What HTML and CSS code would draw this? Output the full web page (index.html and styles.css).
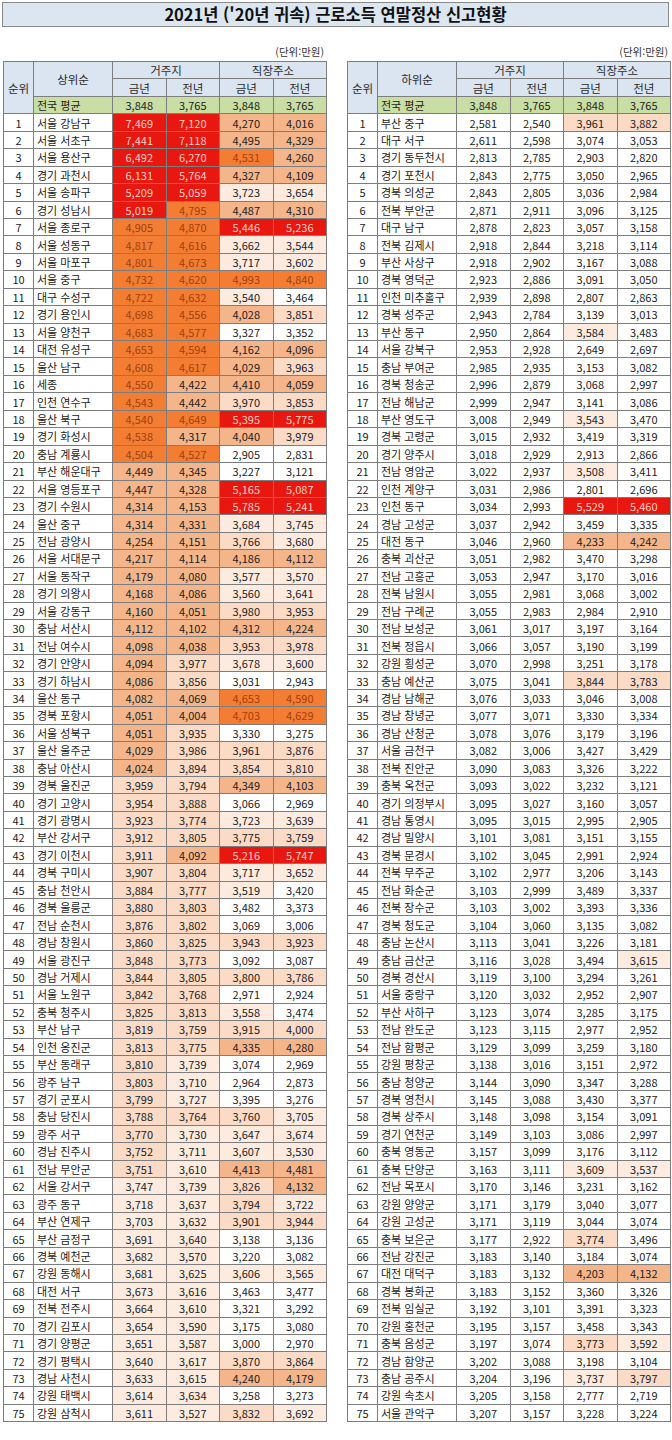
FILE: index.html
```
<!DOCTYPE html>
<html lang="ko">
<head>
<meta charset="utf-8">
<title>2021년 ('20년 귀속) 근로소득 연말정산 신고현황</title>
<link rel="stylesheet" href="styles.css">
</head>
<body>
<div class="page">
  <div class="title">2021년 ('20년 귀속) 근로소득 연말정산 신고현황</div>
  <div class="tables">
    <div class="panel">
      <div class="unit">(단위:만원)</div>
      <table class="tb">
        <colgroup><col class="c1"><col class="c2"><col class="c3"><col class="c3"><col class="c3"><col class="c3"></colgroup>
        <thead>
          <tr><th rowspan="3">순위</th><th rowspan="2">상위순</th><th colspan="2">거주지</th><th colspan="2">직장주소</th></tr>
          <tr><th>금년</th><th>전년</th><th>금년</th><th>전년</th></tr>
          <tr class="avg"><td>전국 평균</td><td>3,848</td><td>3,765</td><td>3,848</td><td>3,765</td></tr>
        </thead>
        <tbody>
          <tr><td>1</td><td>서울 강남구</td><td class="f">7,469</td><td class="f">7,120</td><td class="d">4,270</td><td class="d">4,016</td></tr>
          <tr><td>2</td><td>서울 서초구</td><td class="f">7,441</td><td class="f">7,118</td><td class="d">4,495</td><td class="d">4,329</td></tr>
          <tr><td>3</td><td>서울 용산구</td><td class="f">6,492</td><td class="f">6,270</td><td class="e">4,531</td><td class="d">4,260</td></tr>
          <tr><td>4</td><td>경기 과천시</td><td class="f">6,131</td><td class="f">5,764</td><td class="d">4,327</td><td class="d">4,109</td></tr>
          <tr><td>5</td><td>서울 송파구</td><td class="f">5,209</td><td class="f">5,059</td><td class="b">3,723</td><td class="b">3,654</td></tr>
          <tr><td>6</td><td>경기 성남시</td><td class="f">5,019</td><td class="e">4,795</td><td class="d">4,487</td><td class="d">4,310</td></tr>
          <tr><td>7</td><td>서울 종로구</td><td class="e">4,905</td><td class="e">4,870</td><td class="f">5,446</td><td class="f">5,236</td></tr>
          <tr><td>8</td><td>서울 성동구</td><td class="e">4,817</td><td class="e">4,616</td><td class="b">3,662</td><td class="b">3,544</td></tr>
          <tr><td>9</td><td>서울 마포구</td><td class="e">4,801</td><td class="e">4,673</td><td class="b">3,717</td><td class="b">3,602</td></tr>
          <tr><td>10</td><td>서울 중구</td><td class="e">4,732</td><td class="e">4,620</td><td class="e">4,993</td><td class="e">4,840</td></tr>
          <tr><td>11</td><td>대구 수성구</td><td class="e">4,722</td><td class="e">4,632</td><td class="b">3,540</td><td>3,464</td></tr>
          <tr><td>12</td><td>경기 용인시</td><td class="e">4,698</td><td class="e">4,556</td><td class="d">4,028</td><td class="c">3,851</td></tr>
          <tr><td>13</td><td>서울 양천구</td><td class="e">4,683</td><td class="e">4,577</td><td>3,327</td><td>3,352</td></tr>
          <tr><td>14</td><td>대전 유성구</td><td class="e">4,653</td><td class="e">4,594</td><td class="d">4,162</td><td class="d">4,096</td></tr>
          <tr><td>15</td><td>울산 남구</td><td class="e">4,608</td><td class="e">4,617</td><td class="d">4,029</td><td class="c">3,963</td></tr>
          <tr><td>16</td><td>세종</td><td class="e">4,550</td><td class="d">4,422</td><td class="d">4,410</td><td class="d">4,059</td></tr>
          <tr><td>17</td><td>인천 연수구</td><td class="e">4,543</td><td class="d">4,442</td><td class="c">3,970</td><td class="c">3,853</td></tr>
          <tr><td>18</td><td>울산 북구</td><td class="e">4,540</td><td class="e">4,649</td><td class="f">5,395</td><td class="f">5,775</td></tr>
          <tr><td>19</td><td>경기 화성시</td><td class="e">4,538</td><td class="d">4,317</td><td class="d">4,040</td><td class="c">3,979</td></tr>
          <tr><td>20</td><td>충남 계룡시</td><td class="e">4,504</td><td class="e">4,527</td><td>2,905</td><td>2,831</td></tr>
          <tr><td>21</td><td>부산 해운대구</td><td class="d">4,449</td><td class="d">4,345</td><td>3,227</td><td>3,121</td></tr>
          <tr><td>22</td><td>서울 영등포구</td><td class="d">4,447</td><td class="d">4,328</td><td class="f">5,165</td><td class="f">5,087</td></tr>
          <tr><td>23</td><td>경기 수원시</td><td class="d">4,314</td><td class="d">4,153</td><td class="f">5,785</td><td class="f">5,241</td></tr>
          <tr><td>24</td><td>울산 중구</td><td class="d">4,314</td><td class="d">4,331</td><td class="b">3,684</td><td class="b">3,745</td></tr>
          <tr><td>25</td><td>전남 광양시</td><td class="d">4,254</td><td class="d">4,151</td><td class="c">3,766</td><td class="b">3,680</td></tr>
          <tr><td>26</td><td>서울 서대문구</td><td class="d">4,217</td><td class="d">4,114</td><td class="d">4,186</td><td class="d">4,112</td></tr>
          <tr><td>27</td><td>서울 동작구</td><td class="d">4,179</td><td class="d">4,080</td><td class="b">3,577</td><td class="b">3,570</td></tr>
          <tr><td>28</td><td>경기 의왕시</td><td class="d">4,168</td><td class="d">4,086</td><td class="b">3,560</td><td class="b">3,641</td></tr>
          <tr><td>29</td><td>서울 강동구</td><td class="d">4,160</td><td class="d">4,051</td><td class="c">3,980</td><td class="c">3,953</td></tr>
          <tr><td>30</td><td>충남 서산시</td><td class="d">4,112</td><td class="d">4,102</td><td class="d">4,312</td><td class="d">4,224</td></tr>
          <tr><td>31</td><td>전남 여수시</td><td class="d">4,098</td><td class="d">4,038</td><td class="c">3,953</td><td class="c">3,978</td></tr>
          <tr><td>32</td><td>경기 안양시</td><td class="d">4,094</td><td class="c">3,977</td><td class="b">3,678</td><td class="b">3,600</td></tr>
          <tr><td>33</td><td>경기 하남시</td><td class="d">4,086</td><td class="c">3,856</td><td>3,031</td><td>2,943</td></tr>
          <tr><td>34</td><td>울산 동구</td><td class="d">4,082</td><td class="d">4,069</td><td class="e">4,653</td><td class="e">4,590</td></tr>
          <tr><td>35</td><td>경북 포항시</td><td class="d">4,051</td><td class="d">4,004</td><td class="e">4,703</td><td class="e">4,629</td></tr>
          <tr><td>36</td><td>서울 성북구</td><td class="d">4,051</td><td class="c">3,935</td><td>3,330</td><td>3,275</td></tr>
          <tr><td>37</td><td>울산 울주군</td><td class="d">4,029</td><td class="c">3,986</td><td class="c">3,961</td><td class="c">3,876</td></tr>
          <tr><td>38</td><td>충남 아산시</td><td class="d">4,024</td><td class="c">3,894</td><td class="c">3,854</td><td class="c">3,810</td></tr>
          <tr><td>39</td><td>경북 울진군</td><td class="c">3,959</td><td class="c">3,794</td><td class="d">4,349</td><td class="d">4,103</td></tr>
          <tr><td>40</td><td>경기 고양시</td><td class="c">3,954</td><td class="c">3,888</td><td>3,066</td><td>2,969</td></tr>
          <tr><td>41</td><td>경기 광명시</td><td class="c">3,923</td><td class="c">3,774</td><td class="b">3,723</td><td class="b">3,639</td></tr>
          <tr><td>42</td><td>부산 강서구</td><td class="c">3,912</td><td class="c">3,805</td><td class="c">3,775</td><td class="c">3,759</td></tr>
          <tr><td>43</td><td>경기 이천시</td><td class="c">3,911</td><td class="d">4,092</td><td class="f">5,216</td><td class="f">5,747</td></tr>
          <tr><td>44</td><td>경북 구미시</td><td class="c">3,907</td><td class="c">3,804</td><td class="b">3,717</td><td class="b">3,652</td></tr>
          <tr class="brk"><td>45</td><td>충남 천안시</td><td class="c">3,884</td><td class="c">3,777</td><td class="b">3,519</td><td>3,420</td></tr>
          <tr><td>46</td><td>경북 울릉군</td><td class="c">3,880</td><td class="c">3,803</td><td>3,482</td><td>3,373</td></tr>
          <tr><td>47</td><td>전남 순천시</td><td class="c">3,876</td><td class="c">3,802</td><td>3,069</td><td>3,006</td></tr>
          <tr><td>48</td><td>경남 창원시</td><td class="c">3,860</td><td class="c">3,825</td><td class="c">3,943</td><td class="c">3,923</td></tr>
          <tr><td>49</td><td>서울 광진구</td><td class="c">3,848</td><td class="c">3,773</td><td>3,092</td><td>3,087</td></tr>
          <tr><td>50</td><td>경남 거제시</td><td class="c">3,844</td><td class="c">3,805</td><td class="c">3,800</td><td class="c">3,786</td></tr>
          <tr><td>51</td><td>서울 노원구</td><td class="c">3,842</td><td class="c">3,768</td><td>2,971</td><td>2,924</td></tr>
          <tr><td>52</td><td>충북 청주시</td><td class="c">3,825</td><td class="c">3,813</td><td class="b">3,558</td><td>3,474</td></tr>
          <tr><td>53</td><td>부산 남구</td><td class="c">3,819</td><td class="c">3,759</td><td class="c">3,915</td><td class="c">4,000</td></tr>
          <tr><td>54</td><td>인천 옹진군</td><td class="c">3,813</td><td class="c">3,775</td><td class="d">4,335</td><td class="d">4,280</td></tr>
          <tr><td>55</td><td>부산 동래구</td><td class="c">3,810</td><td class="b">3,739</td><td>3,074</td><td>2,969</td></tr>
          <tr><td>56</td><td>광주 남구</td><td class="c">3,803</td><td class="b">3,710</td><td>2,964</td><td>2,873</td></tr>
          <tr><td>57</td><td>경기 군포시</td><td class="c">3,799</td><td class="b">3,727</td><td>3,395</td><td>3,276</td></tr>
          <tr><td>58</td><td>충남 당진시</td><td class="c">3,788</td><td class="c">3,764</td><td class="c">3,760</td><td class="b">3,705</td></tr>
          <tr><td>59</td><td>광주 서구</td><td class="c">3,770</td><td class="b">3,730</td><td class="b">3,647</td><td class="b">3,674</td></tr>
          <tr><td>60</td><td>경남 진주시</td><td class="c">3,752</td><td class="b">3,711</td><td class="b">3,607</td><td class="b">3,530</td></tr>
          <tr><td>61</td><td>전남 무안군</td><td class="c">3,751</td><td class="b">3,610</td><td class="d">4,413</td><td class="d">4,481</td></tr>
          <tr><td>62</td><td>서울 강서구</td><td class="b">3,747</td><td class="b">3,739</td><td class="c">3,826</td><td class="d">4,132</td></tr>
          <tr><td>63</td><td>광주 동구</td><td class="b">3,718</td><td class="b">3,637</td><td class="c">3,794</td><td class="b">3,722</td></tr>
          <tr><td>64</td><td>부산 연제구</td><td class="b">3,703</td><td class="b">3,632</td><td class="c">3,901</td><td class="c">3,944</td></tr>
          <tr><td>65</td><td>부산 금정구</td><td class="b">3,691</td><td class="b">3,640</td><td>3,138</td><td>3,136</td></tr>
          <tr><td>66</td><td>경북 예천군</td><td class="b">3,682</td><td class="b">3,570</td><td>3,220</td><td>3,082</td></tr>
          <tr class="brk"><td>67</td><td>강원 동해시</td><td class="b">3,681</td><td class="b">3,625</td><td class="b">3,606</td><td class="b">3,565</td></tr>
          <tr><td>68</td><td>대전 서구</td><td class="b">3,673</td><td class="b">3,616</td><td>3,463</td><td>3,477</td></tr>
          <tr><td>69</td><td>전북 전주시</td><td class="b">3,664</td><td class="b">3,610</td><td>3,321</td><td>3,292</td></tr>
          <tr><td>70</td><td>경기 김포시</td><td class="b">3,654</td><td class="b">3,590</td><td>3,175</td><td>3,080</td></tr>
          <tr><td>71</td><td>경기 양평군</td><td class="b">3,651</td><td class="b">3,587</td><td>3,000</td><td>2,970</td></tr>
          <tr><td>72</td><td>경기 평택시</td><td class="b">3,640</td><td class="b">3,617</td><td class="c">3,870</td><td class="c">3,864</td></tr>
          <tr><td>73</td><td>경남 사천시</td><td class="b">3,633</td><td class="b">3,615</td><td class="d">4,240</td><td class="d">4,179</td></tr>
          <tr><td>74</td><td>강원 태백시</td><td class="b">3,614</td><td class="b">3,634</td><td>3,258</td><td>3,273</td></tr>
          <tr><td>75</td><td>강원 삼척시</td><td class="b">3,611</td><td class="b">3,527</td><td class="c">3,832</td><td class="b">3,692</td></tr>
        </tbody>
      </table>
    </div>
    <div class="panel">
      <div class="unit">(단위:만원)</div>
      <table class="tb">
        <colgroup><col class="c1"><col class="c2"><col class="c3"><col class="c3"><col class="c3"><col class="c3"></colgroup>
        <thead>
          <tr><th rowspan="3">순위</th><th rowspan="2">하위순</th><th colspan="2">거주지</th><th colspan="2">직장주소</th></tr>
          <tr><th>금년</th><th>전년</th><th>금년</th><th>전년</th></tr>
          <tr class="avg"><td>전국 평균</td><td>3,848</td><td>3,765</td><td>3,848</td><td>3,765</td></tr>
        </thead>
        <tbody>
          <tr><td>1</td><td>부산 중구</td><td>2,581</td><td>2,540</td><td class="c">3,961</td><td class="c">3,882</td></tr>
          <tr><td>2</td><td>대구 서구</td><td>2,611</td><td>2,598</td><td>3,074</td><td>3,053</td></tr>
          <tr><td>3</td><td>경기 동두천시</td><td>2,813</td><td>2,785</td><td>2,903</td><td>2,820</td></tr>
          <tr><td>4</td><td>경기 포천시</td><td>2,843</td><td>2,775</td><td>3,050</td><td>2,965</td></tr>
          <tr><td>5</td><td>경북 의성군</td><td>2,843</td><td>2,805</td><td>3,036</td><td>2,984</td></tr>
          <tr><td>6</td><td>전북 부안군</td><td>2,871</td><td>2,911</td><td>3,096</td><td>3,125</td></tr>
          <tr><td>7</td><td>대구 남구</td><td>2,878</td><td>2,823</td><td>3,057</td><td>3,158</td></tr>
          <tr><td>8</td><td>전북 김제시</td><td>2,918</td><td>2,844</td><td>3,218</td><td>3,114</td></tr>
          <tr><td>9</td><td>부산 사상구</td><td>2,918</td><td>2,902</td><td>3,167</td><td>3,088</td></tr>
          <tr><td>10</td><td>경북 영덕군</td><td>2,923</td><td>2,886</td><td>3,091</td><td>3,050</td></tr>
          <tr><td>11</td><td>인천 미추홀구</td><td>2,939</td><td>2,898</td><td>2,807</td><td>2,863</td></tr>
          <tr><td>12</td><td>경북 성주군</td><td>2,943</td><td>2,784</td><td>3,139</td><td>3,013</td></tr>
          <tr><td>13</td><td>부산 동구</td><td>2,950</td><td>2,864</td><td class="b">3,584</td><td>3,483</td></tr>
          <tr><td>14</td><td>서울 강북구</td><td>2,953</td><td>2,928</td><td>2,649</td><td>2,697</td></tr>
          <tr><td>15</td><td>충남 부여군</td><td>2,985</td><td>2,935</td><td>3,153</td><td>3,082</td></tr>
          <tr><td>16</td><td>경북 청송군</td><td>2,996</td><td>2,879</td><td>3,068</td><td>2,997</td></tr>
          <tr><td>17</td><td>전남 해남군</td><td>2,999</td><td>2,947</td><td>3,141</td><td>3,086</td></tr>
          <tr><td>18</td><td>부산 영도구</td><td>3,008</td><td>2,949</td><td class="b">3,543</td><td>3,470</td></tr>
          <tr><td>19</td><td>경북 고령군</td><td>3,015</td><td>2,932</td><td>3,419</td><td>3,319</td></tr>
          <tr><td>20</td><td>경기 양주시</td><td>3,018</td><td>2,929</td><td>2,913</td><td>2,866</td></tr>
          <tr><td>21</td><td>전남 영암군</td><td>3,022</td><td>2,937</td><td class="b">3,508</td><td>3,411</td></tr>
          <tr><td>22</td><td>인천 계양구</td><td>3,031</td><td>2,986</td><td>2,801</td><td>2,696</td></tr>
          <tr><td>23</td><td>인천 동구</td><td>3,034</td><td>2,993</td><td class="f">5,529</td><td class="f">5,460</td></tr>
          <tr><td>24</td><td>경남 고성군</td><td>3,037</td><td>2,942</td><td>3,459</td><td>3,335</td></tr>
          <tr><td>25</td><td>대전 동구</td><td>3,046</td><td>2,960</td><td class="d">4,233</td><td class="d">4,242</td></tr>
          <tr><td>26</td><td>충북 괴산군</td><td>3,051</td><td>2,982</td><td>3,470</td><td>3,298</td></tr>
          <tr><td>27</td><td>전남 고흥군</td><td>3,053</td><td>2,947</td><td>3,170</td><td>3,016</td></tr>
          <tr><td>28</td><td>전북 남원시</td><td>3,055</td><td>2,981</td><td>3,068</td><td>3,002</td></tr>
          <tr><td>29</td><td>전남 구례군</td><td>3,055</td><td>2,983</td><td>2,984</td><td>2,910</td></tr>
          <tr><td>30</td><td>전남 보성군</td><td>3,061</td><td>3,017</td><td>3,197</td><td>3,164</td></tr>
          <tr><td>31</td><td>전북 정읍시</td><td>3,066</td><td>3,057</td><td>3,190</td><td>3,199</td></tr>
          <tr><td>32</td><td>강원 횡성군</td><td>3,070</td><td>2,998</td><td>3,251</td><td>3,178</td></tr>
          <tr><td>33</td><td>충남 예산군</td><td>3,075</td><td>3,041</td><td class="c">3,844</td><td class="c">3,783</td></tr>
          <tr><td>34</td><td>경남 남해군</td><td>3,076</td><td>3,033</td><td>3,046</td><td>3,008</td></tr>
          <tr><td>35</td><td>경남 창녕군</td><td>3,077</td><td>3,071</td><td>3,330</td><td>3,334</td></tr>
          <tr><td>36</td><td>경남 산청군</td><td>3,078</td><td>3,076</td><td>3,179</td><td>3,196</td></tr>
          <tr><td>37</td><td>서울 금천구</td><td>3,082</td><td>3,006</td><td>3,427</td><td>3,429</td></tr>
          <tr><td>38</td><td>전북 진안군</td><td>3,090</td><td>3,083</td><td>3,326</td><td>3,222</td></tr>
          <tr><td>39</td><td>충북 옥천군</td><td>3,093</td><td>3,022</td><td>3,232</td><td>3,121</td></tr>
          <tr><td>40</td><td>경기 의정부시</td><td>3,095</td><td>3,027</td><td>3,160</td><td>3,057</td></tr>
          <tr><td>41</td><td>경남 통영시</td><td>3,095</td><td>3,015</td><td>2,995</td><td>2,905</td></tr>
          <tr><td>42</td><td>경남 밀양시</td><td>3,101</td><td>3,081</td><td>3,151</td><td>3,155</td></tr>
          <tr><td>43</td><td>경북 문경시</td><td>3,102</td><td>3,045</td><td>2,991</td><td>2,924</td></tr>
          <tr><td>44</td><td>전북 무주군</td><td>3,102</td><td>2,977</td><td>3,206</td><td>3,143</td></tr>
          <tr class="brk"><td>45</td><td>전남 화순군</td><td>3,103</td><td>2,999</td><td>3,489</td><td>3,337</td></tr>
          <tr><td>46</td><td>전북 장수군</td><td>3,103</td><td>3,002</td><td>3,393</td><td>3,336</td></tr>
          <tr><td>47</td><td>경북 청도군</td><td>3,104</td><td>3,060</td><td>3,135</td><td>3,082</td></tr>
          <tr><td>48</td><td>충남 논산시</td><td>3,113</td><td>3,041</td><td>3,226</td><td>3,181</td></tr>
          <tr><td>49</td><td>충남 금산군</td><td>3,116</td><td>3,028</td><td>3,494</td><td class="b">3,615</td></tr>
          <tr><td>50</td><td>경북 경산시</td><td>3,119</td><td>3,100</td><td>3,294</td><td>3,261</td></tr>
          <tr><td>51</td><td>서울 중랑구</td><td>3,120</td><td>3,032</td><td>2,952</td><td>2,907</td></tr>
          <tr><td>52</td><td>부산 사하구</td><td>3,123</td><td>3,074</td><td>3,285</td><td>3,175</td></tr>
          <tr><td>53</td><td>전남 완도군</td><td>3,123</td><td>3,115</td><td>2,977</td><td>2,952</td></tr>
          <tr><td>54</td><td>전남 함평군</td><td>3,129</td><td>3,099</td><td>3,259</td><td>3,180</td></tr>
          <tr><td>55</td><td>강원 평창군</td><td>3,138</td><td>3,016</td><td>3,151</td><td>2,972</td></tr>
          <tr><td>56</td><td>충남 청양군</td><td>3,144</td><td>3,090</td><td>3,347</td><td>3,288</td></tr>
          <tr><td>57</td><td>경북 영천시</td><td>3,145</td><td>3,088</td><td>3,430</td><td>3,377</td></tr>
          <tr><td>58</td><td>경북 상주시</td><td>3,148</td><td>3,098</td><td>3,154</td><td>3,091</td></tr>
          <tr><td>59</td><td>경기 연천군</td><td>3,149</td><td>3,103</td><td>3,086</td><td>2,997</td></tr>
          <tr><td>60</td><td>충북 영동군</td><td>3,157</td><td>3,099</td><td>3,176</td><td>3,112</td></tr>
          <tr><td>61</td><td>충북 단양군</td><td>3,163</td><td>3,111</td><td class="b">3,609</td><td class="b">3,537</td></tr>
          <tr><td>62</td><td>전남 목포시</td><td>3,170</td><td>3,146</td><td>3,231</td><td>3,162</td></tr>
          <tr><td>63</td><td>강원 양양군</td><td>3,171</td><td>3,179</td><td>3,040</td><td>3,077</td></tr>
          <tr><td>64</td><td>강원 고성군</td><td>3,171</td><td>3,119</td><td>3,044</td><td>3,074</td></tr>
          <tr><td>65</td><td>충북 보은군</td><td>3,177</td><td>2,922</td><td class="c">3,774</td><td>3,496</td></tr>
          <tr><td>66</td><td>전남 강진군</td><td>3,183</td><td>3,140</td><td>3,184</td><td>3,074</td></tr>
          <tr class="brk"><td>67</td><td>대전 대덕구</td><td>3,183</td><td>3,132</td><td class="d">4,203</td><td class="d">4,132</td></tr>
          <tr><td>68</td><td>경북 봉화군</td><td>3,183</td><td>3,152</td><td>3,360</td><td>3,326</td></tr>
          <tr><td>69</td><td>전북 임실군</td><td>3,192</td><td>3,101</td><td>3,391</td><td>3,323</td></tr>
          <tr><td>70</td><td>강원 홍천군</td><td>3,195</td><td>3,157</td><td>3,458</td><td>3,343</td></tr>
          <tr><td>71</td><td>충북 음성군</td><td>3,197</td><td>3,074</td><td class="c">3,773</td><td class="b">3,592</td></tr>
          <tr><td>72</td><td>경남 함양군</td><td>3,202</td><td>3,088</td><td>3,198</td><td>3,104</td></tr>
          <tr><td>73</td><td>충남 공주시</td><td>3,204</td><td>3,196</td><td class="b">3,737</td><td class="c">3,797</td></tr>
          <tr><td>74</td><td>강원 속초시</td><td>3,205</td><td>3,158</td><td>2,777</td><td>2,719</td></tr>
          <tr><td>75</td><td>서울 관악구</td><td>3,207</td><td>3,157</td><td>3,228</td><td>3,224</td></tr>
        </tbody>
      </table>
    </div>
  </div>
</div>
</body>
</html>
```
FILE: styles.css
```
* { box-sizing: border-box; }
html, body { margin: 0; padding: 0; background: #ffffff; }
body {
  font-family: "Noto Sans CJK KR", "Noto Sans", "Liberation Sans", sans-serif;
  color: #222;
}
.page { width: 672px; padding-top: 2px; }
.title {
  margin: 0 3px 0 2px;
  height: 25px;
  border: 1px solid #8a8a8a;
  background: #dce6f1;
  text-align: center;
  font-weight: 700;
  font-size: 16.5px;
  line-height: 23px;
  color: #111;
}
.tables {
  display: flex;
  gap: 21px;
  padding-left: 3px;
  margin-top: 18px;
}
.panel { width: 323px; }
.unit {
  text-align: right;
  font-size: 10.5px;
  line-height: 14px;
  height: 14px;
  margin-bottom: 2px;
  padding-right: 2px;
  color: #333;
}
.tb {
  width: 323px;
  table-layout: fixed;
  border-collapse: collapse;
  font-size: 11px;
}
.tb col.c1 { width: 30px; }
.tb col.c2 { width: 79px; }
.tb col.c3 { width: 53.5px; }
.tb tr { height: 17.45px; }
.tb th, .tb td {
  border: 1px solid #7d7d7d;
  padding: 0;
  line-height: 12px;
  text-align: center;
  white-space: nowrap;
  overflow: hidden;
  font-weight: 400;
}
.tb th {
  background: #dbe5f1;
  color: #2a2a2a;
  font-size: 11.5px;
}
.tb tbody td:nth-child(2) { text-align: left; padding-left: 3px; }
.tb .avg td { background: #c8dea4; }
.tb .avg td:first-child { text-align: left; padding-left: 3px; }
.tb tr.brk td { border-top: 1px solid #000; }
.tb td.b { background: #fdebe0; }
.tb td.c { background: #fbdac6; }
.tb td.d { background: #f5b58b; }
.tb td.e { background: #f27d33; color: #a3400c; }
.tb td.f { background: #e8170f; color: #ffd3c9; }
```
